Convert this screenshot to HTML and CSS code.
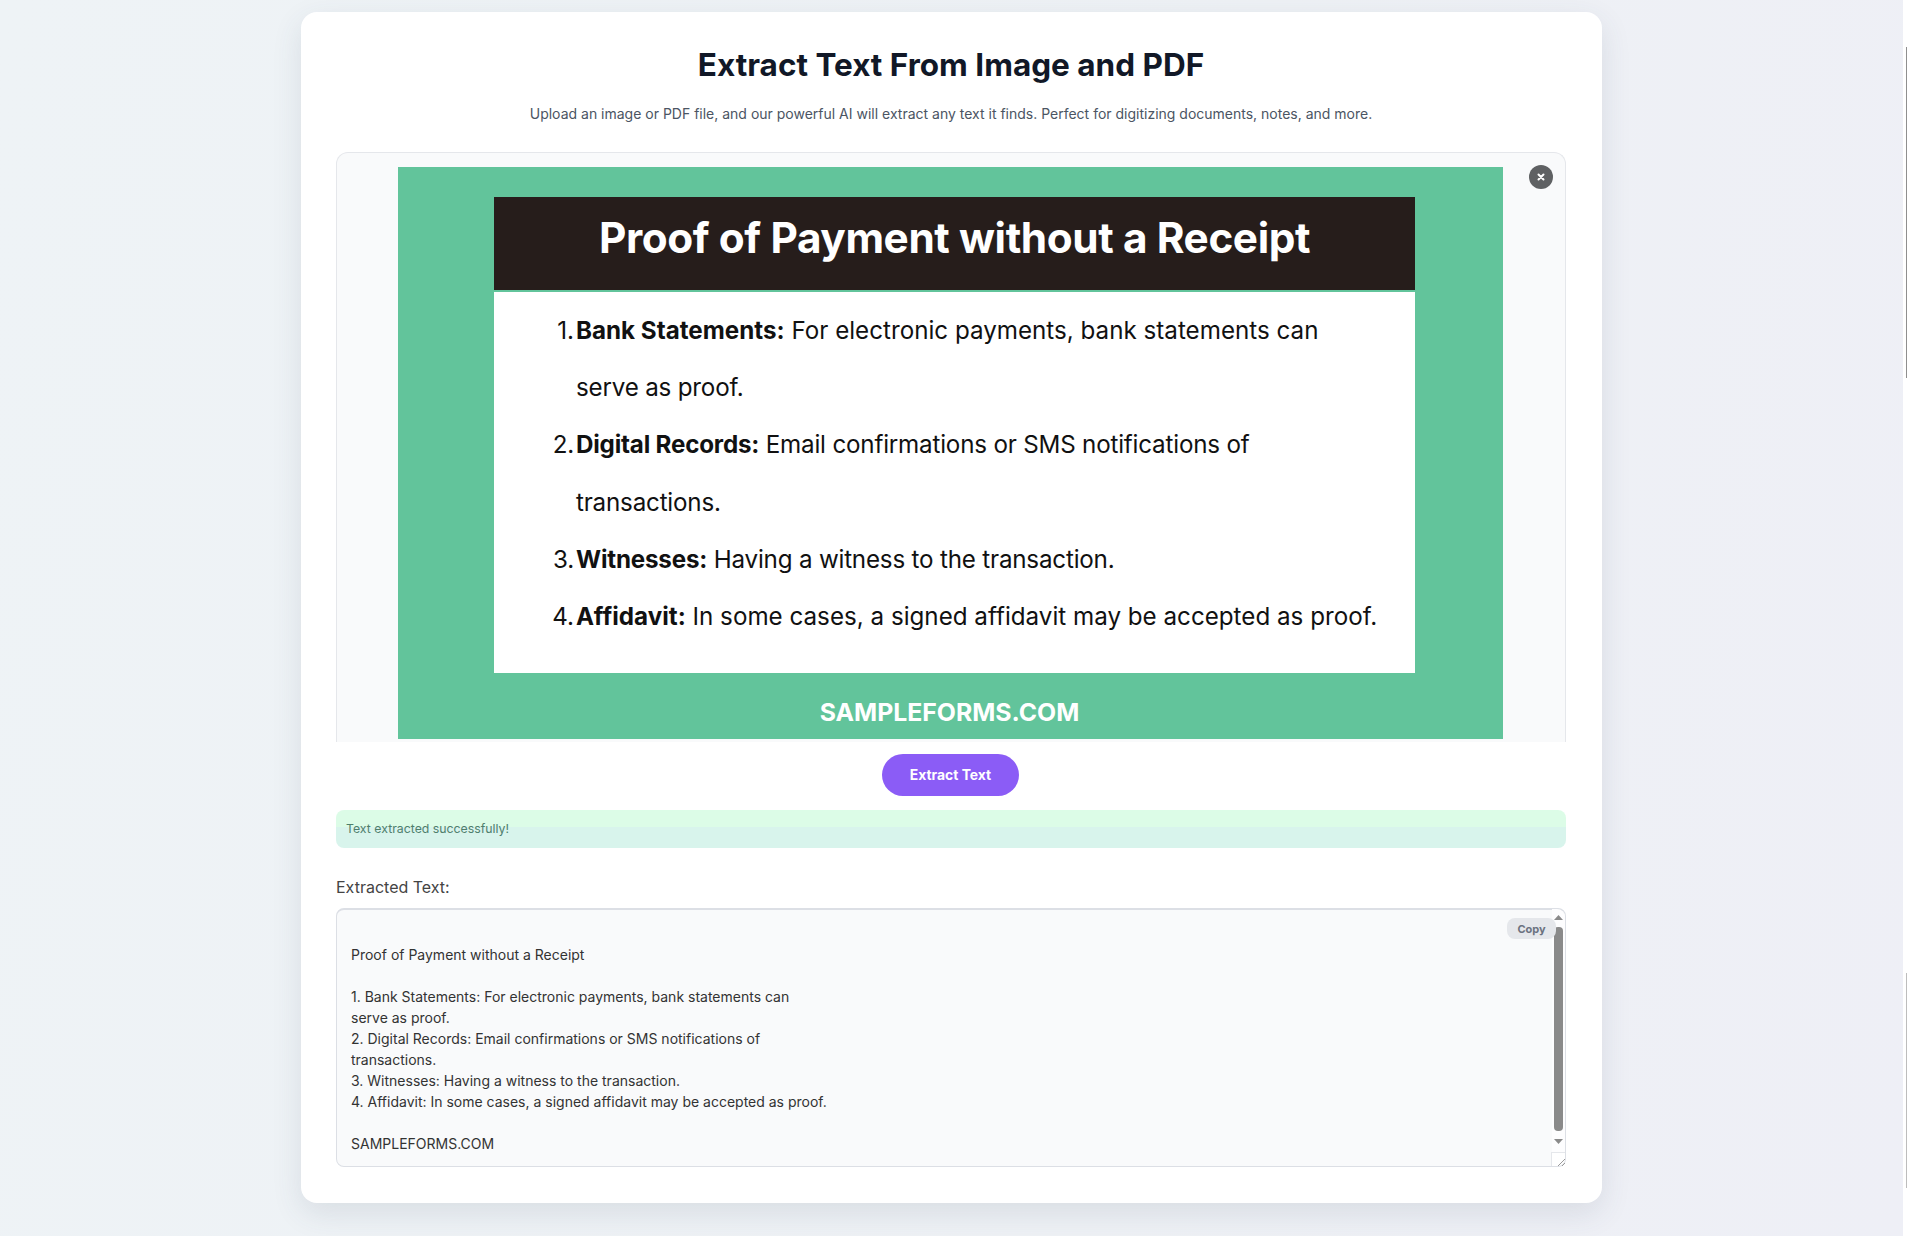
FILE: index.html
```html
<!DOCTYPE html>
<html lang="en">
<head>
    <meta charset="UTF-8">
    <meta name="viewport" content="width=device-width, initial-scale=1.0">
    <title>Extract Text From Image and PDF</title>
    <link rel="stylesheet" href="styles.css">
</head>
<body>
    <div class="page">
        <main class="card">
            <h1>Extract Text From Image and PDF</h1>
            <p class="subtitle">Upload an image or PDF file, and our powerful AI will extract any text it finds. Perfect for digitizing documents, notes, and more.</p>

            <div class="preview">
                <div class="slide">
                    <div class="slide-title">Proof of Payment without a Receipt</div>
                    <ol class="slide-body">
                        <li class="slide-row"><span class="slide-num">1.</span><span><b>Bank Statements:</b> For electronic payments, bank statements can</span></li>
                        <li class="slide-row tight"><span class="slide-num"></span><span>serve as proof.</span></li>
                        <li class="slide-row tight"><span class="slide-num">2.</span><span><b>Digital Records:</b> Email confirmations or SMS notifications of</span></li>
                        <li class="slide-row tight"><span class="slide-num"></span><span>transactions.</span></li>
                        <li class="slide-row tight"><span class="slide-num">3.</span><span><b>Witnesses:</b> Having a witness to the transaction.</span></li>
                        <li class="slide-row"><span class="slide-num">4.</span><span><b>Affidavit:</b> In some cases, a signed affidavit may be accepted as proof.</span></li>
                    </ol>
                    <div class="slide-footer">SAMPLEFORMS.COM</div>
                </div>
                <button class="close-btn" aria-label="Remove file">
                    <svg width="10" height="10" viewBox="0 0 10 10"><path d="M2.5 2.5l5 5M7.5 2.5l-5 5" stroke="#fff" stroke-width="2" stroke-linecap="round"/></svg>
                </button>
            </div>

            <div class="actions">
                <button class="extract-btn">Extract Text</button>
            </div>

            <div class="status">Text extracted successfully!</div>

            <label class="result-label" for="result">Extracted Text:</label>
            <div class="result">
                <textarea id="result" class="result-text" readonly>

Proof of Payment without a Receipt

1. Bank Statements: For electronic payments, bank statements can
serve as proof.
2. Digital Records: Email confirmations or SMS notifications of
transactions.
3. Witnesses: Having a witness to the transaction.
4. Affidavit: In some cases, a signed affidavit may be accepted as proof.

SAMPLEFORMS.COM</textarea>
                <div class="scrollbar">
                    <svg class="arrow" width="9" height="5" viewBox="0 0 9 5"><path d="M4.5 0l4.5 5H0z" fill="#8a8a8a"/></svg>
                    <div class="thumb"></div>
                    <svg class="arrow" width="9" height="5" viewBox="0 0 9 5"><path d="M0 0h9L4.5 5z" fill="#8a8a8a"/></svg>
                </div>
                <div class="resizer">
                    <svg width="8" height="8" viewBox="0 0 8 8"><path d="M1 8l7-7M5 8l3-3" stroke="#9a9a9a" stroke-width="1"/></svg>
                </div>
                <button class="copy-btn">Copy</button>
            </div>
        </main>
    </div>
    <div class="window-edge">
        <span class="edge-line edge-dark"></span>
        <span class="edge-line edge-light"></span>
    </div>
</body>
</html>
```

FILE: styles.css
```css
* {
    margin: 0;
    padding: 0;
    box-sizing: border-box;
}

html, body {
    height: 100%;
}

body {
    display: flex;
    overflow: hidden;
    font-family: 'Inter', 'Liberation Sans', sans-serif;
    background-color: #fff;
    color: #333;
}

.page {
    flex: 1;
    display: flex;
    justify-content: center;
    align-items: flex-start;
    padding-top: 12px;
    background: linear-gradient(100deg, #eef3f6 0%, #eef1f5 60%, #eeeff6 100%);
}

.card {
    width: 1301px;
    padding: 35px 36px 36px 35px;
    background: #fff;
    border-radius: 16px;
    box-shadow: 0 10px 30px rgba(60, 70, 100, 0.12);
}

h1 {
    font-size: 31.5px;
    line-height: 36px;
    font-weight: 700;
    text-align: center;
    color: #111827;
}

.subtitle {
    margin-top: 20px;
    margin-bottom: 27px;
    font-size: 14px;
    line-height: 22px;
    text-align: center;
    color: #4b5563;
}

/* uploaded file preview, cut off at the bottom */
.preview {
    position: relative;
    height: 590px;
    padding-top: 14px;
    padding-right: 1px;
    display: flex;
    justify-content: center;
    align-items: flex-start;
    overflow: hidden;
    background: #f9fafb;
    border: 1px solid #e5e7eb;
    border-bottom: none;
    border-radius: 12px 12px 0 0;
}

.slide {
    width: 1105px;
    height: 572px;
    padding: 30px 88px 0 96px;
    background: #62c49b;
    font-family: 'Inter', 'Liberation Sans', sans-serif;
}

.slide-title {
    height: 93px;
    margin-bottom: 2px;
    padding-bottom: 12px;
    display: flex;
    align-items: center;
    justify-content: center;
    background: #261d1b;
    color: #fff;
    font-size: 42.3px;
    font-weight: 700;
    letter-spacing: -0.4px;
}

.slide-body {
    height: 381px;
    padding-top: 10px;
    list-style: none;
    background: #fff;
    color: #111;
}

.slide-row {
    display: flex;
    height: 57.2px;
    align-items: center;
    font-size: 24.2px;
    white-space: nowrap;
}

.slide-row.tight {
    letter-spacing: -0.2px;
}

.slide-num {
    width: 82px;
    padding-right: 2px;
    text-align: right;
}

.slide-footer {
    padding-top: 24px;
    padding-right: 10px;
    text-align: center;
    color: #fff;
    font-size: 24.8px;
    font-weight: 700;
}

.close-btn {
    position: absolute;
    top: 12px;
    right: 12px;
    width: 24px;
    height: 24px;
    display: flex;
    align-items: center;
    justify-content: center;
    border: none;
    border-radius: 50%;
    background: #5f6163;
}

.actions {
    display: flex;
    justify-content: center;
    margin-top: 12px;
    padding-right: 1px;
}

.extract-btn {
    width: 137px;
    height: 42px;
    border: none;
    border-radius: 21px;
    background: #8b5cf6;
    color: #fff;
    font-family: inherit;
    font-size: 13.9px;
    font-weight: 700;
}

.status {
    height: 38px;
    margin-top: 14px;
    padding: 10px 10px 0;
    border-radius: 8px;
    background: linear-gradient(#dcfce7 45%, #d8f4ec 45%);
    color: #4f7f6c;
    font-size: 12.3px;
    line-height: 18px;
}

.result-label {
    display: block;
    margin-top: 29px;
    margin-bottom: 11px;
    font-size: 16px;
    line-height: 20px;
    color: #444;
}

.result {
    position: relative;
    height: 259px;
}

.result-text {
    display: block;
    width: 100%;
    height: 100%;
    padding: 13px 14px;
    overflow: hidden;
    resize: none;
    outline: none;
    background: #f9fafb;
    border: 1px solid #dcdfe5;
    border-top-width: 2px;
    border-radius: 8px;
    color: #333;
    font-family: inherit;
    font-size: 14px;
    line-height: 21px;
}

/* classic scrollbar drawn over the textarea */
.scrollbar {
    position: absolute;
    top: 1px;
    right: 1px;
    width: 13px;
    height: 243px;
    padding-top: 6px;
    display: flex;
    flex-direction: column;
    align-items: center;
    background: #fdfdfe;
    border-top-right-radius: 8px;
}

.thumb {
    width: 9px;
    height: 204px;
    margin: 7px 0 8px;
    border-radius: 4px;
    background: #8a8a8a;
}

.arrow {
    display: block;
}

.resizer {
    position: absolute;
    right: 1px;
    bottom: 1px;
    width: 14px;
    height: 14px;
    padding: 5px 0 0 5px;
    background: #fff;
    border-left: 1px solid #e5e7eb;
    border-top: 1px solid #e5e7eb;
    border-bottom-right-radius: 8px;
    line-height: 0;
}

.copy-btn {
    position: absolute;
    top: 10px;
    right: 10px;
    width: 49px;
    height: 21px;
    border: none;
    border-radius: 8px;
    background: #e5e7eb;
    color: #6b7280;
    font-family: inherit;
    font-size: 11px;
    font-weight: 700;
}

/* strip of the next window at the right edge */
.window-edge {
    position: relative;
    width: 4px;
    background: #fff;
}

.edge-line {
    position: absolute;
    right: 0;
    width: 1px;
}

.edge-dark {
    top: 47px;
    height: 331px;
    background: #8f8f8f;
}

.edge-light {
    top: 973px;
    height: 215px;
    background: #bdbdbd;
}
```
